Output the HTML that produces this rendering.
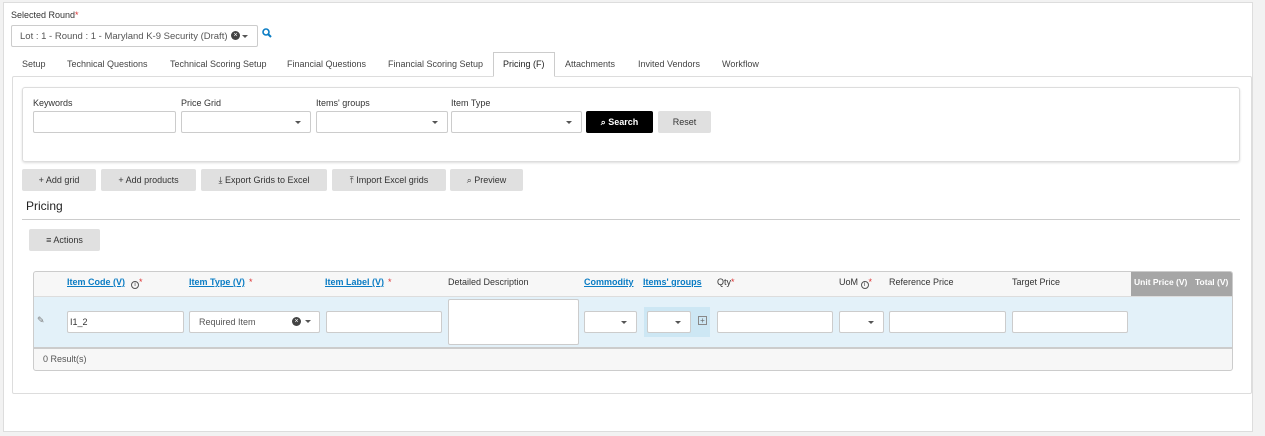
<!DOCTYPE html><html><head><style>
*{box-sizing:border-box;margin:0;padding:0}
body{width:1265px;height:436px;background:#f2f2f2;font-family:"Liberation Sans",sans-serif;font-size:9px;color:#333;position:relative;overflow:hidden}
.a{position:absolute;white-space:nowrap}
.card{left:3px;top:2px;width:1250px;height:430px;background:#fff;border:1px solid #ddd}
.inp{position:absolute;background:#fff;border:1px solid #ccc;border-radius:2px;height:22px;white-space:nowrap;overflow:hidden}
.dd::after{content:"";position:absolute;right:9px;top:9px;border:3px solid transparent;border-top:3px solid #555}
.btn{position:absolute;background:#e0e0e0;border-radius:2px;height:22px;text-align:center;line-height:22px;color:#333;white-space:nowrap;font-size:9px}
.lbl{position:absolute;font-size:9px;color:#333;white-space:nowrap;line-height:11px}
.lnk{color:#0a7cc4;text-decoration:underline;font-weight:bold}
.req{color:#d33}
.i{display:inline-block;width:8px;height:8px;border:1px solid #555;border-radius:50%;font-size:6px;line-height:6px;text-align:center;vertical-align:-1px}
</style></head><body>
<div class="a card"></div>
<div class="lbl" style="left:11px;top:10px">Selected Round<span class="req">*</span></div>
<div class="inp" style="left:11px;top:25px;width:247px;height:22px;font-size:9.5px;color:#555;padding:5px 8px;line-height:11px">Lot : 1 - Round : 1 - Maryland K-9 Security (Draft)</div>
<div class="a" style="left:231px;top:31px;width:9px;height:9px;border-radius:50%;background:#444;color:#fff;font-size:7px;line-height:9px;text-align:center">×</div>
<div class="a" style="left:242px;top:35px;border:3px solid transparent;border-top:3px solid #555"></div>
<svg class="a" style="left:262px;top:28px" width="10" height="10"><circle cx="4" cy="4" r="3" stroke="#0a7cc4" stroke-width="1.6" fill="none"/><line x1="6" y1="6" x2="9" y2="9" stroke="#0a7cc4" stroke-width="2"/></svg>
<div class="a" style="left:12px;top:76px;width:1240px;height:318px;border:1px solid #ddd;border-radius:2px"></div>
<div class="a" style="left:493px;top:52px;width:62px;height:25px;border:1px solid #ccc;border-bottom:1px solid #fff;background:#fff"></div>
<div class="lbl" style="left:22px;top:59px;color:#444">Setup</div>
<div class="lbl" style="left:67px;top:59px;color:#444">Technical Questions</div>
<div class="lbl" style="left:170px;top:59px;color:#444">Technical Scoring Setup</div>
<div class="lbl" style="left:287px;top:59px;color:#444">Financial Questions</div>
<div class="lbl" style="left:388px;top:59px;color:#444">Financial Scoring Setup</div>
<div class="lbl" style="left:503px;top:59px;color:#222">Pricing (F)</div>
<div class="lbl" style="left:565px;top:59px;color:#444">Attachments</div>
<div class="lbl" style="left:638px;top:59px;color:#444">Invited Vendors</div>
<div class="lbl" style="left:722px;top:59px;color:#444">Workflow</div>
<div class="a" style="left:22px;top:87px;width:1218px;height:75px;border:1px solid #ddd;border-radius:3px;box-shadow:0 1px 2px #ddd"></div>
<div class="lbl" style="left:33px;top:98px">Keywords</div>
<div class="lbl" style="left:181px;top:98px">Price Grid</div>
<div class="lbl" style="left:316px;top:98px">Items' groups</div>
<div class="lbl" style="left:451px;top:98px">Item Type</div>
<div class="inp" style="left:33px;top:111px;width:143px"></div>
<div class="inp dd" style="left:181px;top:111px;width:130px"></div>
<div class="inp dd" style="left:316px;top:111px;width:132px"></div>
<div class="inp dd" style="left:451px;top:111px;width:131px"></div>
<div class="btn" style="left:586px;top:111px;width:67px;background:#000;color:#fff;font-weight:bold">&#x2315; Search</div>
<div class="btn" style="left:658px;top:111px;width:53px">Reset</div>
<div class="btn" style="left:22px;top:169px;width:74px">+ Add grid</div>
<div class="btn" style="left:101px;top:169px;width:95px">+ Add products</div>
<div class="btn" style="left:201px;top:169px;width:126px">⤓ Export Grids to Excel</div>
<div class="btn" style="left:332px;top:169px;width:114px">⤒ Import Excel grids</div>
<div class="btn" style="left:450px;top:169px;width:73px">&#x2315; Preview</div>
<div class="lbl" style="left:26px;top:199px;font-size:12px;line-height:14px;color:#222">Pricing</div>
<div class="a" style="left:22px;top:219px;width:1218px;height:1px;background:#ccc"></div>
<div class="btn" style="left:29px;top:229px;width:71px">≡ Actions</div>
<div class="a" style="left:33px;top:271px;width:1200px;height:100px;border:1px solid #ccc;border-radius:3px;background:#f7f7f7;overflow:hidden">
 <div class="a" style="left:0;top:24px;width:1200px;height:53px;background:#e3f1f9;border-top:1px solid #ddd;border-bottom:2px solid #ccc"></div>
 <div class="a" style="left:1097px;top:0;width:103px;height:24px;background:#a6a6a6"></div>
</div>
<div class="lbl lnk" style="left:67px;top:277px">Item Code (V)</div><div class="lbl" style="left:131px;top:277px"><span class="i">i</span><span class="req">*</span></div>
<div class="lbl lnk" style="left:189px;top:277px">Item Type (V)</div><div class="lbl req" style="left:249px;top:277px">*</div>
<div class="lbl lnk" style="left:325px;top:277px">Item Label (V)</div><div class="lbl req" style="left:388px;top:277px">*</div>
<div class="lbl" style="left:448px;top:277px">Detailed Description</div>
<div class="lbl lnk" style="left:584px;top:277px">Commodity</div>
<div class="lbl lnk" style="left:643px;top:277px">Items' groups</div>
<div class="lbl" style="left:717px;top:277px">Qty<span class="req">*</span></div>
<div class="lbl" style="left:839px;top:277px">UoM <span class="i">i</span><span class="req">*</span></div>
<div class="lbl" style="left:889px;top:277px">Reference Price</div>
<div class="lbl" style="left:1012px;top:277px">Target Price</div>
<div class="lbl" style="left:1134px;top:277px;color:#fff;font-weight:bold;font-size:8.5px">Unit Price (V)</div>
<div class="lbl" style="left:1195px;top:277px;color:#fff;font-weight:bold;font-size:8.5px">Total (V)</div>
<div class="lbl" style="left:37px;top:315px;color:#777">✎</div>
<div class="inp" style="left:67px;top:311px;width:117px;padding:5px 2px;font-size:9px">I1_2</div>
<div class="inp" style="left:189px;top:311px;width:131px;padding:5px 9px;font-size:9px;color:#555">Required Item</div>
<div class="a" style="left:292px;top:317px;width:9px;height:9px;border-radius:50%;background:#444;color:#fff;font-size:7px;line-height:9px;text-align:center">×</div>
<div class="a" style="left:305px;top:320px;border:3px solid transparent;border-top:3px solid #555"></div>
<div class="inp" style="left:326px;top:311px;width:116px"></div>
<div class="inp" style="left:448px;top:299px;width:131px;height:46px"></div>
<div class="inp dd" style="left:584px;top:311px;width:53px"></div>
<div class="a" style="left:644px;top:307px;width:66px;height:30px;background:#cde7f4"></div>
<div class="inp dd" style="left:647px;top:311px;width:44px"></div>
<div class="a" style="left:698px;top:316px;width:9px;height:9px;border:1px solid #888;font-size:8px;line-height:7px;text-align:center;color:#666">+</div>
<div class="inp" style="left:717px;top:311px;width:116px"></div>
<div class="inp dd" style="left:839px;top:311px;width:45px"></div>
<div class="inp" style="left:889px;top:311px;width:117px"></div>
<div class="inp" style="left:1012px;top:311px;width:116px"></div>
<div class="lbl" style="left:43px;top:354px;font-size:9px;color:#555">0 Result(s)</div>
</body></html>
